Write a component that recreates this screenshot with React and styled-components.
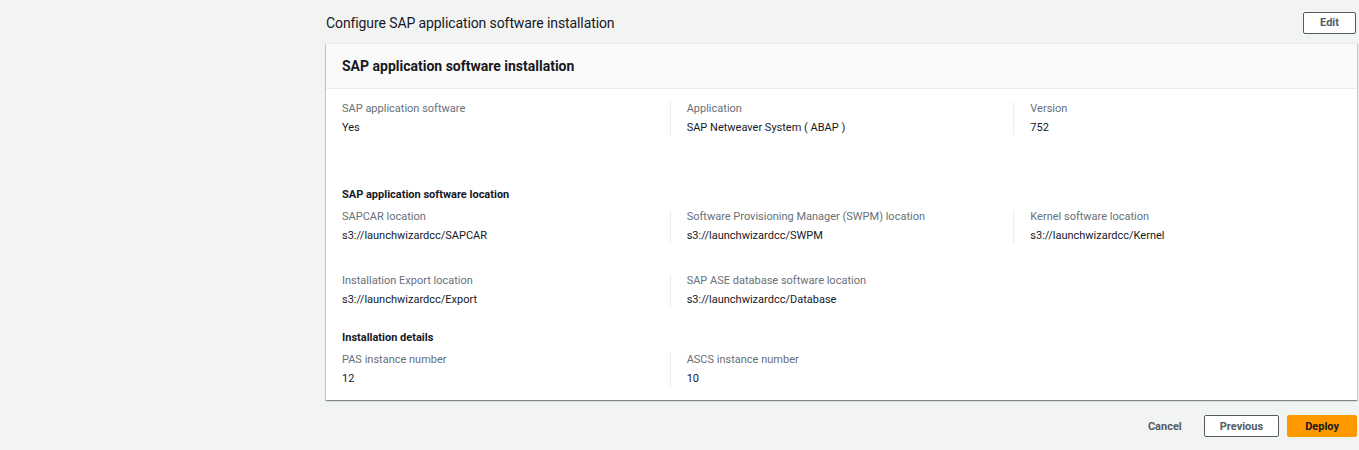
import styled, { createGlobalStyle } from "styled-components"

const GlobalStyle = createGlobalStyle`
    body {
        margin: 0;
        background: #f2f3f3;
        font-family: Roboto, "Liberation Sans", sans-serif;
        color: #16191f;
    }
`

const sections = [
    {
        title: null,
        gap: 53,
        rows: [[
            { label: "SAP application software", value: "Yes" },
            { label: "Application", value: "SAP Netweaver System ( ABAP )" },
            { label: "Version", value: "752" },
        ]],
    },
    {
        title: "SAP application software location",
        gap: 24,
        rows: [
            [
                { label: "SAPCAR location", value: "s3://launchwizardcc/SAPCAR" },
                { label: "Software Provisioning Manager (SWPM) location", value: "s3://launchwizardcc/SWPM" },
                { label: "Kernel software location", value: "s3://launchwizardcc/Kernel" },
            ],
            [
                { label: "Installation Export location", value: "s3://launchwizardcc/Export" },
                { label: "SAP ASE database software location", value: "s3://launchwizardcc/Database" },
            ],
        ],
    },
    {
        title: "Installation details",
        gap: 0,
        rows: [[
            { label: "PAS instance number", value: "12" },
            { label: "ASCS instance number", value: "10" },
        ]],
    },
]

const App = () => {
    return (
        <Page>
            <GlobalStyle />
            <Main>
                <TopBar>
                    <PageTitle>Configure SAP application software installation</PageTitle>
                    <Button $pad={16}>Edit</Button>
                </TopBar>
                <Card>
                    <CardHeader>SAP application software installation</CardHeader>
                    <CardBody>
                        {sections.map((section, i) => (
                            <Section key={i} $gap={section.gap}>
                                {section.title && <SectionTitle>{section.title}</SectionTitle>}
                                {section.rows.map((row, j) => (
                                    <Row key={j}>
                                        {row.map((item) => (
                                            <Column key={item.label}>
                                                <Label>{item.label}</Label>
                                                <Value>{item.value}</Value>
                                            </Column>
                                        ))}
                                    </Row>
                                ))}
                            </Section>
                        ))}
                    </CardBody>
                </Card>
                <Actions>
                    <LinkButton>Cancel</LinkButton>
                    <Button $pad={15}>Previous</Button>
                    <PrimaryButton>Deploy</PrimaryButton>
                </Actions>
            </Main>
        </Page>
    )
}

const Page = styled.div`
    width: 1359px;
    height: 450px;
    padding-left: 326px;
    box-sizing: border-box;
    overflow: hidden;
`
const Main = styled.div`
    width: 1031px;
`
const TopBar = styled.div`
    display: flex;
    align-items: center;
    justify-content: space-between;
    height: 43px;
    padding-top: 2px;
    box-sizing: border-box;
`
const PageTitle = styled.h2`
    margin: 0;
    font-size: 14px;
    font-weight: 400;
    color: #16191f;
    letter-spacing: -0.1px;
`
const Button = styled.button`
    font-family: inherit;
    height: 22px;
    padding: 0 ${(p) => p.$pad || 13}px;
    margin-right: 1px;
    background: #fff;
    border: 1px solid #545b64;
    border-radius: 2px;
    color: #545b64;
    font-size: 11px;
    font-weight: 700;
    cursor: pointer;
`
const PrimaryButton = styled(Button)`
    background: #ff9900;
    border-color: #ff9900;
    color: #16191f;
    padding: 0 17px;
`
const LinkButton = styled(Button)`
    background: transparent;
    border-color: transparent;
    padding: 0 8px;
`
const Card = styled.div`
    background: #fff;
    border-top: 1px solid #eaeded;
    box-shadow: 0 1px 1px 0 rgba(0, 28, 36, 0.3), 1px 1px 1px 0 rgba(0, 28, 36, 0.15), -1px 1px 1px 0 rgba(0, 28, 36, 0.15);
`
const CardHeader = styled.h3`
    margin: 0;
    height: 44px;
    display: flex;
    align-items: center;
    padding: 0 16px;
    background: #fafafa;
    border-bottom: 1px solid #eaeded;
    font-size: 14px;
    font-weight: 700;
`
const CardBody = styled.div`
    padding: 13px 0 14px;
`
const Section = styled.div`
    margin-bottom: ${(p) => p.$gap}px;
`
const SectionTitle = styled.div`
    padding: 0 16px;
    font-size: 11px;
    font-weight: 700;
    line-height: 14px;
    margin-bottom: 8px;
`
const Row = styled.div`
    display: grid;
    grid-template-columns: repeat(3, 1fr);
    & + & {
        margin-top: 31px;
    }
`
const Column = styled.div`
    padding: 0 16px;
    & + & {
        border-left: 1px solid #eaeded;
    }
`
const Label = styled.div`
    font-size: 11px;
    line-height: 14px;
    color: #687078;
    margin-bottom: 5px;
`
const Value = styled.div`
    font-size: 11px;
    line-height: 14px;
    color: #16191f;
`
const Actions = styled.div`
    display: flex;
    justify-content: flex-end;
    align-items: center;
    gap: 8px;
    padding-top: 15px;
    ${Button} {
        margin-right: 0;
    }
    ${LinkButton} {
        margin-right: 5px;
    }
`

export default App
